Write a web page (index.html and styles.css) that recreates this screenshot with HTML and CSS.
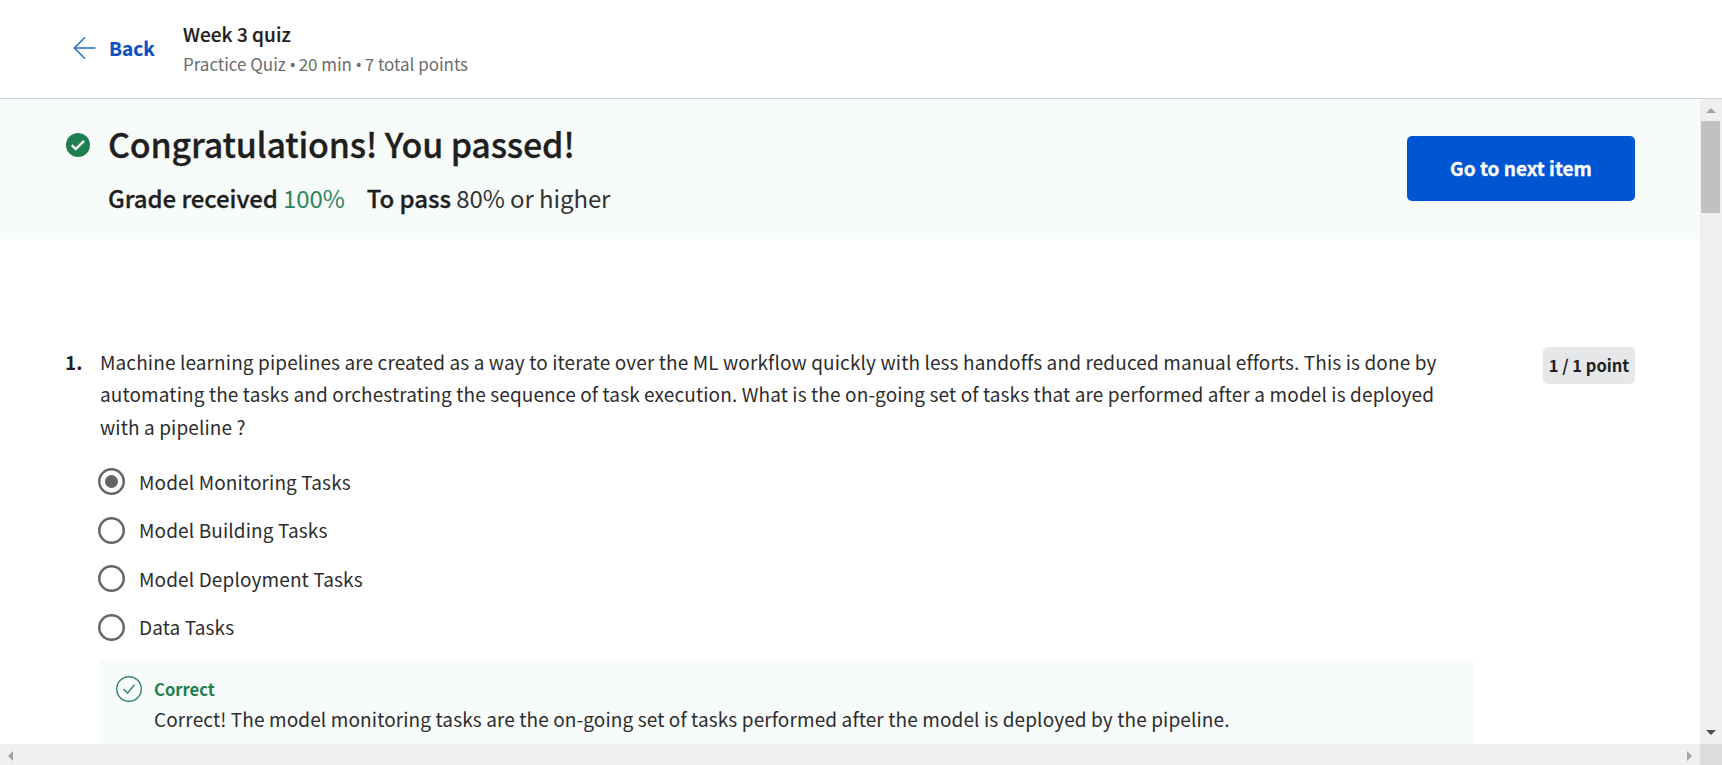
FILE: index.html
```html
<!DOCTYPE html>
<html lang="en">
<head>
<meta charset="utf-8">
<title>Week 3 quiz</title>
<link rel="stylesheet" href="styles.css">
</head>
<body>
<header class="topbar">
  <a class="back">
    <svg class="back-icon" viewBox="0 0 22 22"><path d="M22 11H.8M11.6.2.8 11l10.8 10.8"/></svg>
    <span class="back-label">Back</span>
  </a>
  <div class="heading">
    <div class="heading-title">Week 3 quiz</div>
    <div class="heading-meta">Practice Quiz<span class="dot"> • </span>20 min<span class="dot"> • </span>7 total points</div>
  </div>
</header>
<div class="viewport">
  <main class="content">
    <section class="banner">
      <svg class="banner-icon" viewBox="0 0 24 24"><circle cx="12" cy="12" r="12"/><path d="m5.8 12.1 4 4 8.2-8.2"/></svg>
      <div class="banner-text">
        <h1 class="banner-title">Congratulations! You passed!</h1>
        <p class="grades"><span><b>Grade received</b> <span class="score">100%</span></span><span><b>To pass</b> 80% or higher</span></p>
      </div>
      <button class="next">Go to next item</button>
    </section>
    <section class="question">
      <div class="number">1.</div>
      <div class="body">
        <p class="prompt">Machine learning pipelines are created as a way to iterate over the ML workflow quickly with less handoffs and reduced manual efforts. This is done by<br>automating the tasks and orchestrating the sequence of task execution. What is the on-going set of tasks that are performed after a model is deployed<br>with a pipeline ?</p>
        <ul class="options">
          <li class="option"><span class="radio radio-on"></span>Model Monitoring Tasks</li>
          <li class="option"><span class="radio"></span>Model Building Tasks</li>
          <li class="option"><span class="radio"></span>Model Deployment Tasks</li>
          <li class="option"><span class="radio"></span>Data Tasks</li>
        </ul>
        <div class="feedback">
          <svg class="feedback-icon" viewBox="0 0 26 26"><circle cx="13" cy="13" r="12.3"/><path d="m7.6 13 3.9 4.3 7-8.5"/></svg>
          <div class="feedback-text">
            <div class="feedback-title">Correct</div>
            <div class="feedback-body">Correct! The model monitoring tasks are the on-going set of tasks performed after the model is deployed by the pipeline.</div>
          </div>
        </div>
      </div>
      <div class="points">1 / 1 point</div>
    </section>
  </main>
  <div class="vbar"><i class="arrow up"></i><i class="thumb"></i><i class="arrow down"></i></div>
  <div class="hbar"><i class="arrow left"></i><i class="arrow right"></i></div>
  <div class="corner"></div>
</div>
</body>
</html>
```
FILE: styles.css
```css
* { box-sizing: border-box; }
body {
  margin: 0;
  height: 765px;
  display: flex;
  flex-direction: column;
  overflow: hidden;
  background: #fff;
  color: #1f1f1f;
  font-family: "Noto Sans CJK SC", "Noto Sans", sans-serif;
  white-space: nowrap;
}
h1, p, ul { margin: 0; padding: 0; }
.topbar {
  flex: none;
  height: 99px;
  display: flex;
  border-bottom: 1px solid #d0d3d3;
  padding-left: 73px;
}
.back {
  display: flex;
  align-items: center;
  width: 110px;
  height: 96px;
  gap: 13px;
  color: #0b4fc0;
}
.back-icon { width: 23px; height: 22px; fill: none; stroke: #2a68c4; stroke-width: 1.4; }
.back-label { font-size: 19px; line-height: 28px; font-weight: 700; -webkit-text-stroke: .2px; }
.heading { padding-top: 20px; }
.heading-title { font-size: 19px; line-height: 28px; font-weight: 500; -webkit-text-stroke: .2px; letter-spacing: .04px; }
.heading-meta { font-size: 17px; line-height: 28px; color: #6c6c6c; margin-top: 2px; letter-spacing: -.03px; }
.dot { font-family: "Noto Sans", sans-serif; line-height: 1; letter-spacing: -.8px; }
.viewport {
  flex: 1;
  min-height: 0;
  display: grid;
  grid-template-columns: 1700px 22px;
  grid-template-rows: 645px 21px;
}
.content { overflow: hidden; }
.banner {
  height: 140px;
  display: flex;
  background: #f7fbfa;
  padding: 0 65px 0 66px;
}
.banner-icon { width: 24px; height: 24px; margin: 34px 18px 0 0; fill: #1f7f4f; }
.banner-icon path { fill: none; stroke: #fff; stroke-width: 2.4; }
.banner-text { flex: 1; padding-top: 21px; }
.banner-title { font-size: 34px; line-height: 48px; font-weight: 500; letter-spacing: -.21px; -webkit-text-stroke: .3px; }
.grades { display: flex; gap: 22px; font-size: 24px; line-height: 34px; margin-top: 13px; letter-spacing: -.08px; color: #333; }
.grades b { font-weight: 500; color: #1f1f1f; -webkit-text-stroke: .3px; }
.score { color: #2b8558; }
.next {
  width: 228px;
  height: 65px;
  margin-top: 37px;
  padding: 0 0 2px;
  border: 0;
  border-radius: 5px;
  background: #0056d2;
  color: #fff;
  font: 700 19px/28px "Noto Sans CJK SC", sans-serif;
  -webkit-text-stroke: .3px;
}
.question { display: flex; padding: 107px 65px 0 65px; }
.number { width: 35px; font-size: 19px; line-height: 32px; font-weight: 700; }
.body { width: 1374px; color: #2d2d2d; }
.prompt { font-size: 19px; line-height: 32.3px; letter-spacing: .12px; }
.options { list-style: none; padding-top: 14.5px; }
.option { display: flex; align-items: center; height: 48.5px; gap: 14px; font-size: 19px; line-height: 28px; letter-spacing: .125px; }
.radio { width: 27px; height: 27px; margin-left: -2px; box-shadow: inset 0 0 0 2.5px #666; border-radius: 50%; display: grid; place-items: center; }
.radio-on::before { content: ""; width: 13px; height: 13px; border-radius: 50%; background: #636363; }
.feedback { display: flex; height: 110px; margin-top: 9px; padding: 16px; background: #f7fbfa; }
.feedback-icon { width: 26px; height: 26px; margin-right: 12px; fill: none; stroke: #2f8a60; stroke-width: 1.4; }
.feedback-title { font-size: 16.6px; line-height: 27px; font-weight: 700; color: #1f7f4f; }
.feedback-body { font-size: 19px; line-height: 31px; letter-spacing: .118px; }
.points {
  margin: 1px 0 0 auto;
  width: 92px;
  height: 37px;
  border-radius: 5px;
  background: #e5e7e8;
  font-size: 16.5px;
  line-height: 37px;
  font-weight: 700;
  text-align: center;
}
.vbar { background: #f0f0f0; display: flex; flex-direction: column; align-items: center; padding: 9px 2px 9px 1px; }
.hbar { background: #f0f0f0; display: flex; justify-content: space-between; align-items: center; padding: 2px 8px 0; }
.corner { background: #dcdcdc; }
.thumb { width: 19px; height: 92px; margin-top: 8px; background: #c1c1c1; }
.arrow { border: 5px solid transparent; }
.up { border-top: 0; border-bottom-color: #a3a3a3; }
.down { border-bottom: 0; border-top-color: #505050; margin-top: auto; }
.left { border-left: 0; border-right-color: #a3a3a3; }
.right { border-right: 0; border-left-color: #a3a3a3; }
```
